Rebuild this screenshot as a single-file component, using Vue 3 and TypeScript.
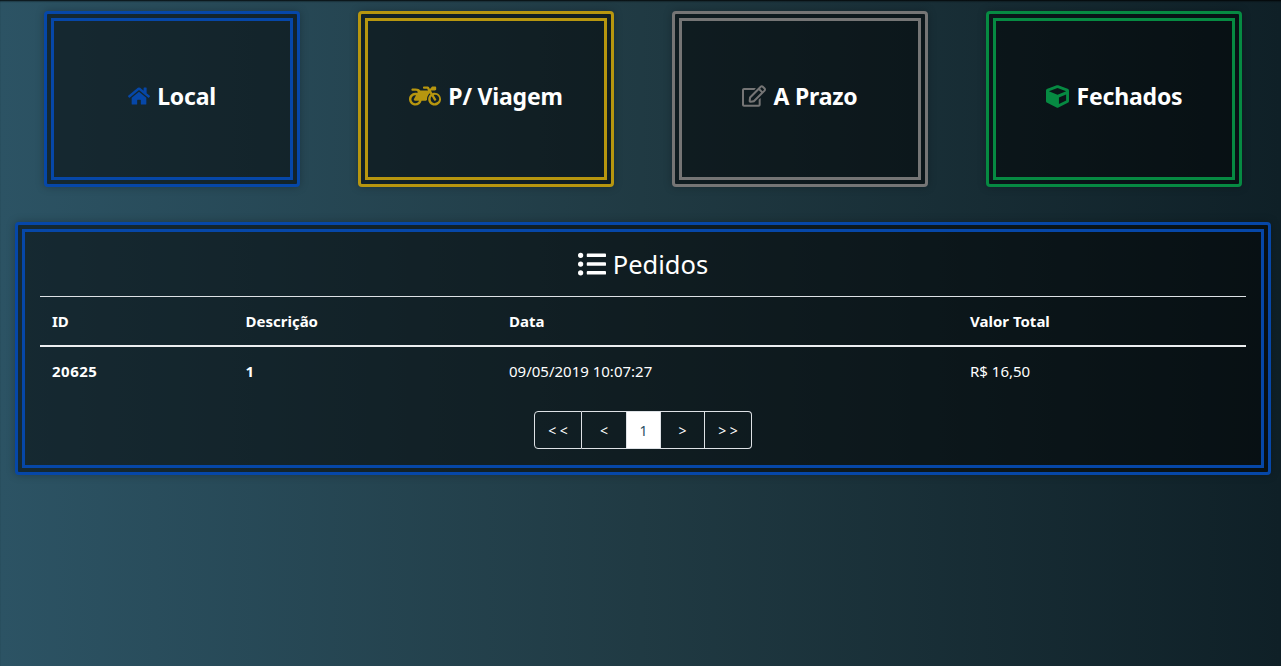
<template>
  <div class="page">
    <div class="cards">
      <div v-for="card in cards" :key="card.label" class="card-col">
        <a class="frame card" :class="`frame--${card.tone}`">
          <div class="frame__inner card__inner">
            <svg class="card__icon" :class="`card__icon--${card.icon}`" :viewBox="icons[card.icon].box" fill="currentColor" aria-hidden="true">
              <path :d="icons[card.icon].d" />
            </svg>
            <span class="card__label">{{ card.label }}</span>
          </div>
        </a>
      </div>
    </div>

    <section class="frame frame--blue panel">
      <div class="frame__inner panel__inner">
        <h2 class="panel__title">
          <svg class="panel__icon" :viewBox="icons.list.box" fill="currentColor" aria-hidden="true">
            <path :d="icons.list.d" />
          </svg>
          Pedidos
        </h2>

        <table class="orders">
          <colgroup>
            <col style="width: 193.5px" />
            <col style="width: 263.5px" />
            <col style="width: 461px" />
            <col style="width: 288px" />
          </colgroup>
          <thead>
            <tr>
              <th>ID</th>
              <th>Descrição</th>
              <th>Data</th>
              <th>Valor Total</th>
            </tr>
          </thead>
          <tbody>
            <tr v-for="order in orders" :key="order.id">
              <td class="strong">{{ order.id }}</td>
              <td class="strong">{{ order.description }}</td>
              <td>{{ order.date }}</td>
              <td>{{ order.total }}</td>
            </tr>
          </tbody>
        </table>

        <nav class="pager">
          <a
            v-for="item in pages"
            :key="item.label"
            class="pager__item"
            :class="{ 'pager__item--active': item.active }"
            :style="{ width: item.width + 'px' }"
          >{{ item.label }}</a>
        </nav>
      </div>
    </section>
  </div>
</template>

<script setup lang="ts">
type IconName = 'home' | 'motorcycle' | 'edit' | 'cube' | 'list';
type Tone = 'blue' | 'yellow' | 'gray' | 'green';

const icons: Record<IconName, { box: string; d: string }> = {
  home: {
    box: '0 0 576 512',
    d: 'M280.37 148.26L96 300.11V464a16 16 0 0 0 16 16l112.06-.29a16 16 0 0 0 15.92-16V368a16 16 0 0 1 16-16h64a16 16 0 0 1 16 16v95.64a16 16 0 0 0 16 16.05L464 480a16 16 0 0 0 16-16V300L295.67 148.26a12.19 12.19 0 0 0-15.3 0zM571.6 251.47L488 182.56V44.05a12 12 0 0 0-12-12h-56a12 12 0 0 0-12 12v72.61L318.47 43a48 48 0 0 0-61 0L4.34 251.47a12 12 0 0 0-1.6 16.9l25.5 31A12 12 0 0 0 45.15 301l235.22-193.74a12.19 12.19 0 0 1 15.3 0L530.9 301a12 12 0 0 0 16.9-1.6l25.5-31a12 12 0 0 0-1.7-16.93z',
  },
  motorcycle: {
    box: '0 0 640 512',
    d: 'M512.9 192c-14.9-.1-29.1 2.3-42.4 6.9L437.6 144H520c13.3 0 24-10.7 24-24V88c0-13.3-10.7-24-24-24h-45.3c-6.8 0-13.3 2.9-17.8 7.9l-37.5 41.7-22.8-38C392.2 68.4 384.4 64 376 64h-80c-8.8 0-16 7.2-16 16v16c0 8.8 7.2 16 16 16h66.4l19.2 32H227.9c-17.7-23.1-44.9-40-99.9-40H72.5C59 104 47.7 115 48 128.5c.2 13 10.9 23.5 24 23.5h56c24.5 0 38.7 10.9 47.8 24.8l-11.3 20.5c-13-3.9-26.9-5.7-41.3-5.2C55.9 194.5 1.6 249.6 0 317c-1.6 72.1 56.3 131 128 131 59.6 0 109.7-40.8 124-96h84.2c13.7 0 24.6-11.4 24-25.1-2.1-47.1 17.5-93.7 56.2-125l12.5 20.8c-27.6 23.7-45.1 58.9-44.8 98.2.5 69.6 57.2 126.5 126.8 127.1 71.6.7 129.8-57.5 129.2-129.1-.7-69.6-57.6-126.4-127.1-126.9zM128 400c-44.1 0-80-35.9-80-80s35.9-80 80-80c4.2 0 8.4.3 12.5 1L99 316.4c-8.8 16 2.8 35.6 21 35.6h81.3c-12.4 28.2-40.6 48-73.3 48zm388.6-.1c-45.9 2.3-84.6-35.6-84.6-81.9 0-21.4 8.3-40.8 21.8-55.3l48.7 81.2c4.5 7.6 14.4 10 22 5.5l13.7-8.2c7.6-4.5 10-14.4 5.5-22l-48.2-80.5c8.9-3.4 18.4-5.3 28.4-5.3 44.1 0 80 35.9 80 80 0 42.3-33.2 76.7-74.3 78.5z',
  },
  edit: {
    box: '0 0 576 512',
    d: 'M402.3 344.9l32-32c5-5 13.7-1.5 13.7 5.7V464c0 26.5-21.5 48-48 48H48c-26.5 0-48-21.5-48-48V112c0-26.5 21.5-48 48-48h273.5c7.1 0 10.7 8.6 5.7 13.7l-32 32c-1.5 1.5-3.5 2.3-5.7 2.3H48v352h352V350.5c0-2.1.8-4.1 2.3-5.6zm156.6-201.8L296.3 405.7l-90.4 10c-26.2 2.9-48.5-19.2-45.6-45.6l10-90.4L432.9 17.1c22.9-22.9 59.9-22.9 82.7 0l43.2 43.2c22.9 22.9 22.9 60 .1 82.8zM460.1 174L402 115.9 216.2 301.8l-7.3 65.3 65.3-7.3L460.1 174zm64.8-79.7l-43.2-43.2c-4.1-4.1-10.8-4.1-14.8 0L436 82l58.1 58.1 30.9-30.9c4-4.2 4-10.8-.1-14.9z',
  },
  cube: {
    box: '0 0 512 512',
    d: 'M239.1 6.3l-208 78c-18.7 7-31.1 25-31.1 45v225.1c0 18.2 10.3 34.8 26.5 42.9l208 104c13.5 6.8 29.4 6.8 42.9 0l208-104c16.3-8.1 26.5-24.8 26.5-42.9V129.3c0-20-12.4-37.9-31.1-44.9l-208-78C262 2.2 250 2.2 239.1 6.3zM256 68.4l192 72v1.1l-192 78-192-78v-1.1l192-72zm32 356V275.5l160-65v133.9l-160 80z',
  },
  list: {
    box: '0 0 512 512',
    d: 'M48 48a48 48 0 1 0 48 48 48 48 0 0 0-48-48zm0 160a48 48 0 1 0 48 48 48 48 0 0 0-48-48zm0 160a48 48 0 1 0 48 48 48 48 0 0 0-48-48zm448 16H176a16 16 0 0 0-16 16v32a16 16 0 0 0 16 16h320a16 16 0 0 0 16-16v-32a16 16 0 0 0-16-16zm0-320H176a16 16 0 0 0-16 16v32a16 16 0 0 0 16 16h320a16 16 0 0 0 16-16V80a16 16 0 0 0-16-16zm0 160H176a16 16 0 0 0-16 16v32a16 16 0 0 0 16 16h320a16 16 0 0 0 16-16v-32a16 16 0 0 0-16-16z',
  },
};

const cards: { label: string; icon: IconName; tone: Tone }[] = [
  { label: 'Local', icon: 'home', tone: 'blue' },
  { label: 'P/ Viagem', icon: 'motorcycle', tone: 'yellow' },
  { label: 'A Prazo', icon: 'edit', tone: 'gray' },
  { label: 'Fechados', icon: 'cube', tone: 'green' },
];

const orders = [
  { id: '20625', description: '1', date: '09/05/2019 10:07:27', total: 'R$ 16,50' },
];

const pages = [
  { label: '< <', width: 48, active: false },
  { label: '<', width: 45, active: false },
  { label: '1', width: 34, active: true },
  { label: '>', width: 44, active: false },
  { label: '> >', width: 47, active: false },
];
</script>

<style>
html,
body {
  height: 100%;
  margin: 0;
}

body {
  background: linear-gradient(to right, #2c5364, #203a43, #0f2027);
}
</style>

<style scoped>
.page {
  box-sizing: border-box;
  height: 666px;
  padding: 11px 10px 0 15px;
  overflow: hidden;
  box-shadow: inset 0 2px 2px -1px rgba(0, 0, 0, 0.9);
  font-family: "Noto Sans", "Open Sans", sans-serif;
  color: #fff;
}

/* molduras de borda dupla */
.frame {
  display: block;
  box-sizing: border-box;
  border: 3px solid var(--tone);
  border-radius: 4px;
  padding: 4px;
  background: rgba(0, 0, 0, 0.5);
  box-shadow: 0 0 8px rgba(0, 0, 0, 0.25);
}

.frame__inner {
  box-sizing: border-box;
  height: 100%;
  border: 3px solid var(--tone);
}

.frame--blue {
  --tone: #0647a8;
}

.frame--yellow {
  --tone: #b7960f;
}

.frame--gray {
  --tone: #757575;
}

.frame--green {
  --tone: #068a42;
}

/* cartões */
.cards {
  display: grid;
  grid-template-columns: repeat(4, 314px);
}

.card-col {
  padding: 0 29px;
}

.card {
  height: 176px;
}

.card__inner {
  display: flex;
  align-items: center;
  justify-content: center;
  gap: 7px;
  padding-bottom: 6px;
}

.card__icon {
  height: 22px;
  color: var(--tone);
}

.card__icon--home {
  width: 22px;
}

.card__icon--motorcycle {
  width: 32px;
  height: 26px;
}

.card__icon--edit {
  width: 24px;
}

.card__icon--cube {
  width: 23px;
  height: 23px;
  margin-right: 1px;
}

.card__label {
  font-size: 23px;
  font-weight: 700;
  line-height: 1;
  letter-spacing: -0.2px;
}

/* painel de pedidos */
.panel {
  margin-top: 35px;
  height: 253px;
}

.panel__inner {
  padding: 0 15px;
}

.panel__title {
  display: flex;
  align-items: center;
  justify-content: center;
  gap: 7px;
  height: 64px;
  margin: 0;
  box-sizing: border-box;
  padding-bottom: 1px;
  font-size: 25.5px;
  font-weight: 400;
}

.panel__icon {
  width: 28px;
  height: 28px;
}

.orders {
  width: 1206px;
  table-layout: fixed;
  border-collapse: collapse;
  font-size: 15px;
}

.orders th {
  height: 47px;
  padding: 0 12px 1px;
  border-top: 1px solid #dee2e6;
  border-bottom: 2px solid #eceef0;
  text-align: left;
  font-weight: 700;
}

.orders td {
  height: 48px;
  padding: 0 12px 2px;
}

.orders .strong {
  font-weight: 700;
  letter-spacing: 0.5px;
}

.pager {
  display: flex;
  justify-content: center;
  margin-top: 14px;
}

.pager__item {
  box-sizing: border-box;
  display: flex;
  align-items: center;
  justify-content: center;
  height: 38px;
  border: 1px solid #dee2e6;
  border-left: 0;
  font-size: 14px;
}

.pager__item:first-child {
  border-left: 1px solid #dee2e6;
  border-radius: 4px 0 0 4px;
}

.pager__item:last-child {
  border-radius: 0 4px 4px 0;
}

.pager__item--active {
  background: #fff;
  color: #1f4e63;
}
</style>
